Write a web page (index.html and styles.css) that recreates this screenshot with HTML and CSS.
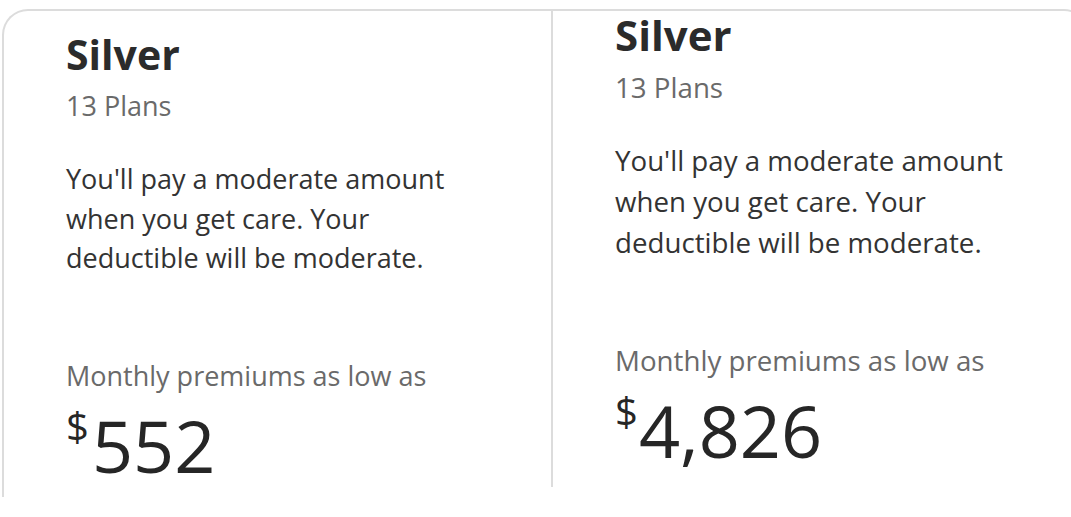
FILE: index.html
```html
<!DOCTYPE html>
<html lang="en">
<head>
<meta charset="utf-8">
<title>Silver plans</title>
<link rel="stylesheet" href="styles.css">
</head>
<body>
<div class="frame">
  <section class="card card-left">
    <h2 class="title">Silver</h2>
    <p class="count">13 Plans</p>
    <p class="desc">You'll pay a moderate amount when you get care. Your deductible will be moderate.</p>
    <p class="label">Monthly premiums as low as</p>
    <p class="price"><span class="cur">$</span>552</p>
  </section>
  <section class="card card-right">
    <h2 class="title">Silver</h2>
    <p class="count">13 Plans</p>
    <p class="desc">You'll pay a moderate amount when you get care. Your deductible will be moderate.</p>
    <p class="label">Monthly premiums as low as</p>
    <p class="price"><span class="cur">$</span>4,826</p>
  </section>
</div>
</body>
</html>
```
FILE: styles.css
```css
html, body {
  margin: 0;
  padding: 0;
  background: #ffffff;
  overflow: hidden;
}
body {
  width: 1071px;
  height: 517px;
  font-family: "Open Sans", "Noto Sans", sans-serif;
  color: #2b2b2b;
}
.frame {
  margin-top: 9px;
  margin-left: 2px;
  width: 1090px;
  height: 488px;
  border-top: 2px solid #dcdcdc;
  border-left: 2px solid #dcdcdc;
  border-right: 2px solid #dcdcdc;
  border-radius: 26px 28px 0 0;
  display: flex;
  box-sizing: border-box;
}
.card {
  box-sizing: border-box;
  padding-left: 62px;
}
.card p, .card h2 { margin: 0; }
.card-left {
  width: 547px;
  padding-top: 17px;
}
.card-right {
  flex: 1;
  border-left: 2px solid #dcdcdc;
  height: 478px;
  margin-top: -2px;
  padding-top: 0;
}
.title {
  font-size: 41px;
  font-weight: 700;
  line-height: 52px;
  color: #2b2b2b;
}
.count {
  font-size: 27px;
  line-height: 40px;
  margin-top: 6px !important;
  color: #6a6a6a;
}
.desc {
  font-size: 27px;
  line-height: 39.5px;
  color: #333333;
  margin-top: 33px !important;
  width: 420px;
}
.label {
  font-size: 27px;
  line-height: 40px;
  color: #6a6a6a;
  margin-top: 78px !important;
}
.price {
  font-size: 72px;
  line-height: 80px;
  color: #262626;
  margin-top: 9px !important;
}
.cur {
  font-size: 40px;
  line-height: 0;
  vertical-align: 32px;
  margin-right: 3px;
}
.card-right .title { font-size: 42px; }
.card-right .count { font-size: 27.7px; }
.card-right .desc { font-size: 27.7px; line-height: 41px; width: 440px; margin-top: 33px !important; }
.card-right .label { font-size: 27.7px; margin-top: 77px !important; }
.card-right .price { margin-top: 10px !important; }
.card-right .cur { margin-right: 1px; }
```
